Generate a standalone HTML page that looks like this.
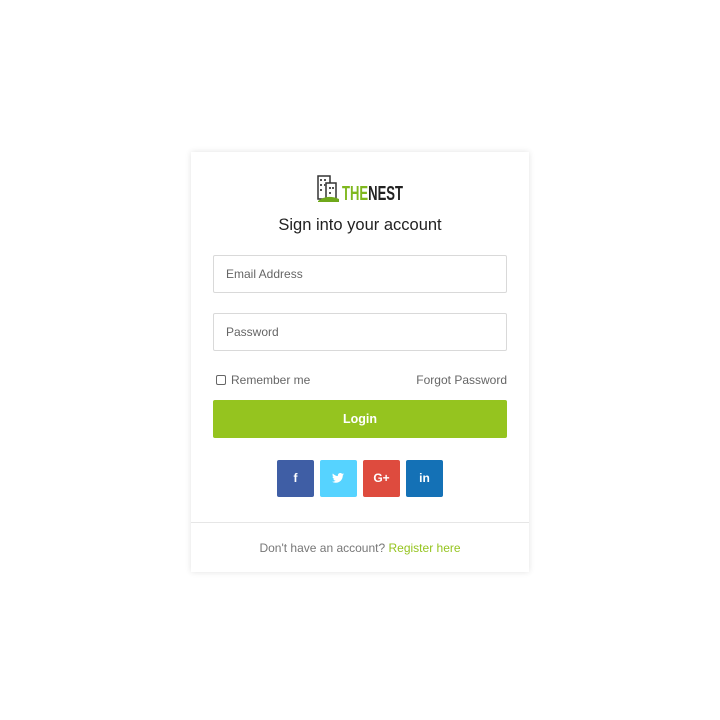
<!DOCTYPE html>
<html><head><style>
body{margin:0;background:#fff;font-family:"Liberation Sans",sans-serif;width:720px;height:720px;position:relative}
.card{position:absolute;left:191px;top:152px;width:338px;height:420px;background:#fff;box-shadow:0 0 6px rgba(0,0,0,.12)}
.logo{position:absolute;left:126px;top:22px;width:90px;height:30px}
h1{position:absolute;top:64px;left:0;width:100%;text-align:center;font-size:16.5px;font-weight:normal;color:#222;margin:0}
.inp{position:absolute;left:22px;width:294px;height:38px;border:1px solid #d9d9d9;border-radius:2px;font-size:12px;color:#666;line-height:36px;padding-left:12px;box-sizing:border-box}
.rm{position:absolute;left:25px;top:221px;font-size:12px;color:#666}
.rm i{display:inline-block;width:8px;height:8px;border:1px solid #666;border-radius:2px;vertical-align:-1px;margin-right:5px}
.fp{position:absolute;right:22px;top:221px;font-size:12px;color:#666}
.btn{position:absolute;left:22px;top:248px;width:294px;height:38px;background:#95c41f;border-radius:2px;color:#fff;font-weight:bold;font-size:12.5px;text-align:center;line-height:38px}
.s{position:absolute;top:308px;width:37px;height:37px;border-radius:2px;color:#fff;font-weight:bold;font-size:12px;text-align:center;line-height:37px}
.s svg{position:absolute;left:12px;top:13px}
.foot{position:absolute;top:370px;left:0;width:100%;border-top:1px solid #e6e6e6;text-align:center;font-size:12px;color:#777;padding-top:18px}
.foot span{color:#95c41f}
</style></head><body>
<div class="card">
<svg class="logo" viewBox="0 0 90 30">
<rect x="1" y="2" width="12" height="23" fill="#fff" stroke="#333" stroke-width="1.5"/>
<rect x="9" y="9" width="10" height="16" fill="#fff" stroke="#333" stroke-width="1.5"/>
<g fill="#555"><rect x="3" y="5" width="2" height="2"/><rect x="7" y="5" width="2" height="2"/><rect x="3" y="10" width="2" height="2"/><rect x="7" y="10" width="2" height="2"/><rect x="3" y="15" width="2" height="2"/><rect x="12" y="13" width="2" height="2"/><rect x="15" y="13" width="2" height="2"/><rect x="12" y="18" width="2" height="2"/></g>
<path d="M1 27 Q10 20 22 25 L22 28 L1 28Z" fill="#6fa81b"/>
<text x="25" y="26" font-family="Liberation Sans" font-weight="bold" font-size="20" textLength="61" lengthAdjust="spacingAndGlyphs"><tspan fill="#7fb81e">THE</tspan><tspan fill="#222">NEST</tspan></text>
</svg>
<h1>Sign into your account</h1>
<div class="inp" style="top:103px">Email Address</div>
<div class="inp" style="top:161px">Password</div>
<div class="rm"><i></i>Remember me</div>
<div class="fp">Forgot Password</div>
<div class="btn">Login</div>
<div class="s" style="left:86px;background:#3f5ea5">f</div>
<div class="s" style="left:129px;background:#56d3ff"><svg width="12" height="10" viewBox="0 0 24 20"><path fill="#fff" d="M24 2.4c-.9.4-1.8.7-2.8.8 1-.6 1.8-1.6 2.2-2.7-1 .6-2 1-3.1 1.2C19.3.7 18 0 16.6 0c-2.7 0-4.9 2.2-4.9 4.9 0 .4 0 .8.1 1.1C7.7 5.8 4.1 3.9 1.7.9c-.4.7-.7 1.6-.7 2.5 0 1.7.9 3.2 2.2 4.1-.8 0-1.6-.2-2.2-.6v.1c0 2.4 1.7 4.4 3.9 4.8-.4.1-.8.2-1.3.2-.3 0-.6 0-.9-.1.6 2 2.4 3.4 4.6 3.4-1.7 1.3-3.8 2.1-6.1 2.1-.4 0-.8 0-1.2-.1 2.2 1.4 4.8 2.2 7.5 2.2 9.1 0 14-7.5 14-14v-.6c1-.7 1.8-1.6 2.5-2.5z"/></svg></div>
<div class="s" style="left:172px;background:#de4b3e">G+</div>
<div class="s" style="left:215px;background:#1471b6">in</div>
<div class="foot">Don't have an account? <span>Register here</span></div>
</div>
</body></html>
